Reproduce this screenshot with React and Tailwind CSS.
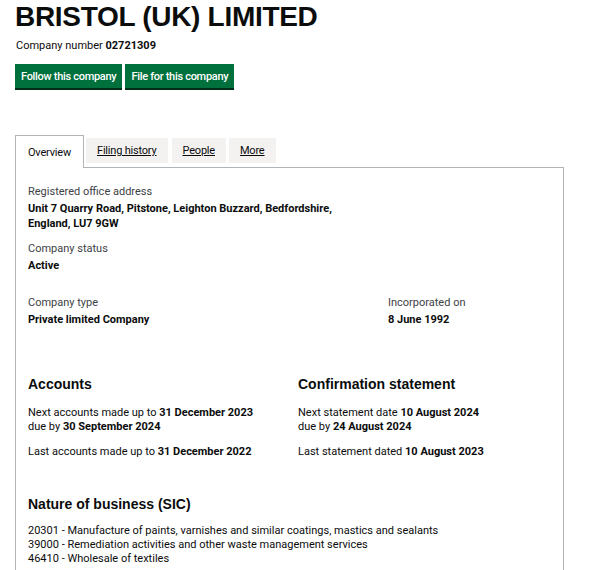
const body = { fontFamily: 'Roboto, "Liberation Sans", Arial, sans-serif' };
const heading = { fontFamily: '"Liberation Sans", Arial, sans-serif' };

export default function App() {
  return (
    <div className="bg-white text-[#0b0c0c] w-[592px] h-[570px] overflow-hidden" style={body}>
      <div className="px-[15px]">
        <h1 className="text-[28px] leading-[32px] font-bold pt-[1px] tracking-[-0.3px]" style={heading}>
          BRISTOL (UK) LIMITED
        </h1>
        <p className="text-[11px] leading-[14px] mt-[6px] pl-px">
          Company number <strong>02721309</strong>
        </p>
        <div className="flex gap-[3px] mt-[11px]">
          <Button>Follow this company</Button>
          <Button>File for this company</Button>
        </div>

        <div className="mt-[47px] w-[549px]">
          <div className="flex items-end gap-[3px] relative z-10 tracking-[-0.2px]">
            <div className="bg-white border border-[#b1b4b6] border-b-0 h-[33px] px-[12px] pt-[9px] text-[11px] -mb-px">
              Overview
            </div>
            <Tab className="px-[11px] -ml-px">Filing history</Tab>
            <Tab className="px-[11px] ml-px">People</Tab>
            <Tab className="px-[11px]">More</Tab>
          </div>
          <div className="border border-[#b1b4b6] border-b-0 px-[12px] pt-[16px] pb-[20px] text-[11px]">
            <Label>Registered office address</Label>
            <Value>
              Unit 7 Quarry Road, Pitstone, Leighton Buzzard, Bedfordshire,<br />
              England, LU7 9GW
            </Value>

            <div className="mt-[10px]">
              <Label>Company status</Label>
              <Value>Active</Value>
            </div>

            <div className="mt-[22px] flex">
              <div className="w-[360px]">
                <Label>Company type</Label>
                <Value>Private limited Company</Value>
              </div>
              <div>
                <Label>Incorporated on</Label>
                <Value>8 June 1992</Value>
              </div>
            </div>

            <div className="mt-[48px] flex">
              <div className="w-[270px]">
                <H2 className="mb-[13px]">Accounts</H2>
                <Line>Next accounts made up to <b>31 December 2023</b></Line>
                <Line>due by <b>30 September 2024</b></Line>
                <Line className="mt-[11px]">Last accounts made up to <b>31 December 2022</b></Line>
              </div>
              <div>
                <H2 className="mb-[13px]">Confirmation statement</H2>
                <Line>Next statement date <b>10 August 2024</b></Line>
                <Line>due by <b>24 August 2024</b></Line>
                <Line className="mt-[11px]">Last statement dated <b>10 August 2023</b></Line>
              </div>
            </div>

            <div className="mt-[36px]">
              <H2 className="mb-[11px]">Nature of business (SIC)</H2>
              <Line>20301 - Manufacture of paints, varnishes and similar coatings, mastics and sealants</Line>
              <Line>39000 - Remediation activities and other waste management services</Line>
              <Line>46410 - Wholesale of textiles</Line>
            </div>
          </div>
        </div>
      </div>
    </div>
  );
}

function Button({ children }) {
  return (
    <button className="bg-[#00703c] text-white text-[11px] font-medium h-[24px] px-[6px] tracking-[-0.3px] shadow-[0_2px_0_#002d18] leading-none">
      {children}
    </button>
  );
}

function Tab({ children, className = '' }) {
  return (
    <div className={`bg-[#f3f2f1] h-[25px] pt-[5px] text-[11px] underline mb-[4px] ${className}`}>
      {children}
    </div>
  );
}

function Label({ children }) {
  return <p className="text-[11px] leading-[15px] text-[#3d4245]">{children}</p>;
}

function Value({ children }) {
  return <p className="text-[11px] leading-[15px] font-bold mt-[2px]">{children}</p>;
}

function H2({ children, className = '' }) {
  return (
    <h2 className={`text-[14px] leading-[18px] font-bold ${className}`} style={heading}>
      {children}
    </h2>
  );
}

function Line({ children, className = '' }) {
  return <p className={`text-[11px] leading-[14px] ${className}`}>{children}</p>;
}
